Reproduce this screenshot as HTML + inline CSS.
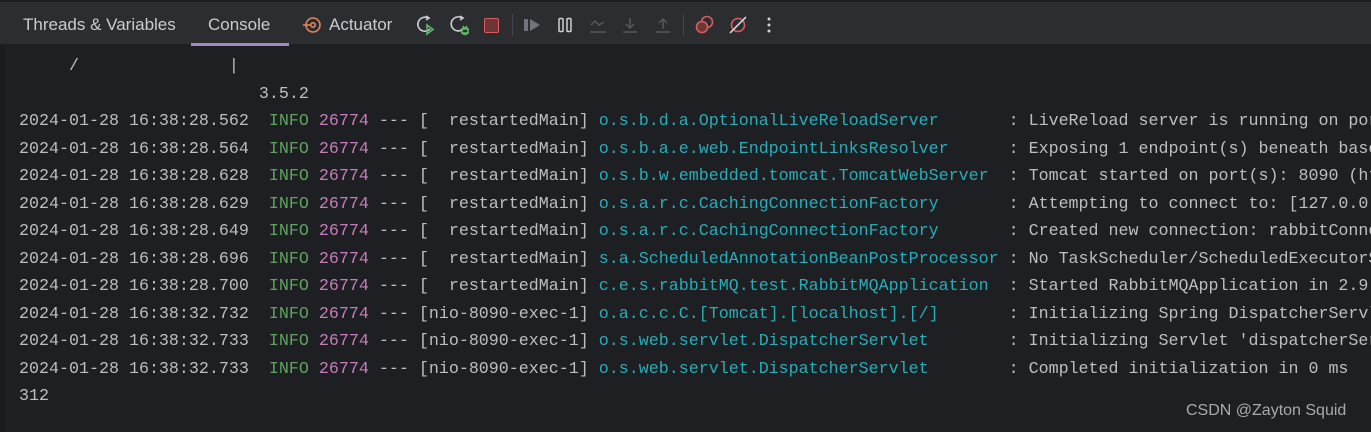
<!DOCTYPE html>
<html><head><meta charset="utf-8"><style>
html,body{margin:0;padding:0;width:1371px;height:432px;overflow:hidden;background:#1e1f22;font-family:"Liberation Sans",sans-serif}
.wrap{position:absolute;left:0;top:0;width:1371px;height:432px;overflow:hidden}
.hdr{position:absolute;left:0;top:0;width:1371px;height:45px;background:#2b2d30;border-top:2px solid #1e1f22;box-sizing:border-box;border-bottom:1px solid #1e1f22}
.tab{position:absolute;top:13px;font-size:17px;color:#c9ccd2}
.ul{position:absolute;left:191px;top:41px;width:98px;height:3px;background:#a889c4}
.sep{position:absolute;top:12px;width:1px;height:22px;background:#43454a}
pre{position:absolute;left:19px;top:53px;margin:0;font-family:"Liberation Mono",monospace;font-size:16.67px;line-height:27.5px;color:#bcbec4;width:1352px;overflow:hidden}
.g{color:#5fa35f}.p{color:#c77dbb}.t{color:#2aacb8}
.wm{position:absolute;left:1186px;top:402px;font-size:16px;color:#c0c2c6;opacity:.85}
.gut{position:absolute;left:0;top:45px;width:5px;height:387px;background:#1b1c1f}
</style></head><body><div class="wrap">
<div class="hdr">
<div class="tab" style="left:23px">Threads &amp; Variables</div>
<div class="tab" style="left:208px">Console</div>
<svg style="position:absolute;left:302px;top:13px" width="20" height="20" viewBox="0 0 20 20" fill="none" stroke="#e0875a" stroke-width="1.6"><circle cx="11" cy="10" r="7"/><circle cx="11" cy="10" r="2.2"/><line x1="1" y1="10" x2="8.5" y2="10"/></svg>
<div class="tab" style="left:329px">Actuator</div>
<div class="ul"></div>
<svg style="position:absolute;left:414px;top:12px" width="24" height="24" viewBox="0 0 24 24" fill="none" stroke-width="1.6"><path d="M14 4a7 7 0 1 0 2 11" stroke="#ced0d6"/><path d="M12 2l3 2-3 2" stroke="#ced0d6"/><path d="M13 11v9l6-4.5z" stroke="#5fb865"/></svg>
<svg style="position:absolute;left:448px;top:12px" width="24" height="24" viewBox="0 0 24 24" fill="none" stroke-width="1.6"><path d="M14 4a7 7 0 1 0 1 11" stroke="#ced0d6"/><path d="M12 2l3 2-3 2" stroke="#ced0d6"/><ellipse cx="17" cy="17" rx="3" ry="3.5" stroke="#5fb865"/><path d="M13 15h8M13 19h8M15 12l1 2M19 12l-1 2" stroke="#5fb865"/></svg>
<div style="position:absolute;left:484px;top:16px;width:13px;height:13px;border:1.6px solid #db5c5c;background:#6e3535;border-radius:2px"></div>
<div class="sep" style="left:512px"></div>
<svg style="position:absolute;left:522px;top:13px" width="22" height="20" viewBox="0 0 22 20"><rect x="2" y="4" width="4" height="12" fill="#6f737a"/><path d="M8 4l10 6-10 6z" fill="#6f737a"/></svg>
<svg style="position:absolute;left:556px;top:13px" width="20" height="20" viewBox="0 0 20 20" fill="none" stroke="#ced0d6" stroke-width="1.5"><rect x="3" y="3.5" width="4" height="13" rx="1"/><rect x="11" y="3.5" width="4" height="13" rx="1"/></svg>
<svg style="position:absolute;left:588px;top:13px" width="20" height="20" viewBox="0 0 20 20" fill="none" stroke="#55585e" stroke-width="1.5"><path d="M3 10l4-4 4 4 5-3"/><path d="M2 17h16"/></svg>
<svg style="position:absolute;left:620px;top:13px" width="20" height="20" viewBox="0 0 20 20" fill="none" stroke="#55585e" stroke-width="1.5"><path d="M10 3v10M6 9l4 4 4-4M3 17h14"/></svg>
<svg style="position:absolute;left:653px;top:13px" width="20" height="20" viewBox="0 0 20 20" fill="none" stroke="#55585e" stroke-width="1.5"><path d="M10 14V4M6 8l4-4 4 4M3 17h14"/></svg>
<div class="sep" style="left:683px"></div>
<svg style="position:absolute;left:694px;top:12px" width="22" height="22" viewBox="0 0 22 22" fill="none" stroke="#db5c5c" stroke-width="1.6"><circle cx="13" cy="8" r="5.5"/><circle cx="8" cy="13" r="5.5" fill="#6e3535"/></svg>
<svg style="position:absolute;left:727px;top:12px" width="22" height="22" viewBox="0 0 22 22" fill="none" stroke-width="1.6"><circle cx="11" cy="11" r="6.5" stroke="#db5c5c"/><path d="M3 19L19 3" stroke="#ced0d6"/></svg>
<svg style="position:absolute;left:764px;top:13px" width="10" height="20" viewBox="0 0 10 20" fill="#ced0d6"><circle cx="5" cy="4" r="1.5"/><circle cx="5" cy="10" r="1.5"/><circle cx="5" cy="16" r="1.5"/></svg>
</div>
<div class="gut"></div>
<pre>     /               |
                        3.5.2
2024-01-28 16:38:28.562  <span class="g">INFO</span> <span class="p">26774</span> --- [  restartedMain] <span class="t">o.s.b.d.a.OptionalLiveReloadServer      </span> : LiveReload server is running on port 35729
2024-01-28 16:38:28.564  <span class="g">INFO</span> <span class="p">26774</span> --- [  restartedMain] <span class="t">o.s.b.a.e.web.EndpointLinksResolver     </span> : Exposing 1 endpoint(s) beneath base path
2024-01-28 16:38:28.628  <span class="g">INFO</span> <span class="p">26774</span> --- [  restartedMain] <span class="t">o.s.b.w.embedded.tomcat.TomcatWebServer </span> : Tomcat started on port(s): 8090 (http)
2024-01-28 16:38:28.629  <span class="g">INFO</span> <span class="p">26774</span> --- [  restartedMain] <span class="t">o.s.a.r.c.CachingConnectionFactory      </span> : Attempting to connect to: [127.0.0.1]
2024-01-28 16:38:28.649  <span class="g">INFO</span> <span class="p">26774</span> --- [  restartedMain] <span class="t">o.s.a.r.c.CachingConnectionFactory      </span> : Created new connection: rabbitConnection
2024-01-28 16:38:28.696  <span class="g">INFO</span> <span class="p">26774</span> --- [  restartedMain] <span class="t">s.a.ScheduledAnnotationBeanPostProcessor</span> : No TaskScheduler/ScheduledExecutorService
2024-01-28 16:38:28.700  <span class="g">INFO</span> <span class="p">26774</span> --- [  restartedMain] <span class="t">c.e.s.rabbitMQ.test.RabbitMQApplication </span> : Started RabbitMQApplication in 2.9 seconds
2024-01-28 16:38:32.732  <span class="g">INFO</span> <span class="p">26774</span> --- [nio-8090-exec-1] <span class="t">o.a.c.c.C.[Tomcat].[localhost].[/]      </span> : Initializing Spring DispatcherServlet
2024-01-28 16:38:32.733  <span class="g">INFO</span> <span class="p">26774</span> --- [nio-8090-exec-1] <span class="t">o.s.web.servlet.DispatcherServlet       </span> : Initializing Servlet 'dispatcherServlet'
2024-01-28 16:38:32.733  <span class="g">INFO</span> <span class="p">26774</span> --- [nio-8090-exec-1] <span class="t">o.s.web.servlet.DispatcherServlet       </span> : Completed initialization in 0 ms
312</pre>
<div class="wm">CSDN @Zayton Squid</div>
</div></body></html>
